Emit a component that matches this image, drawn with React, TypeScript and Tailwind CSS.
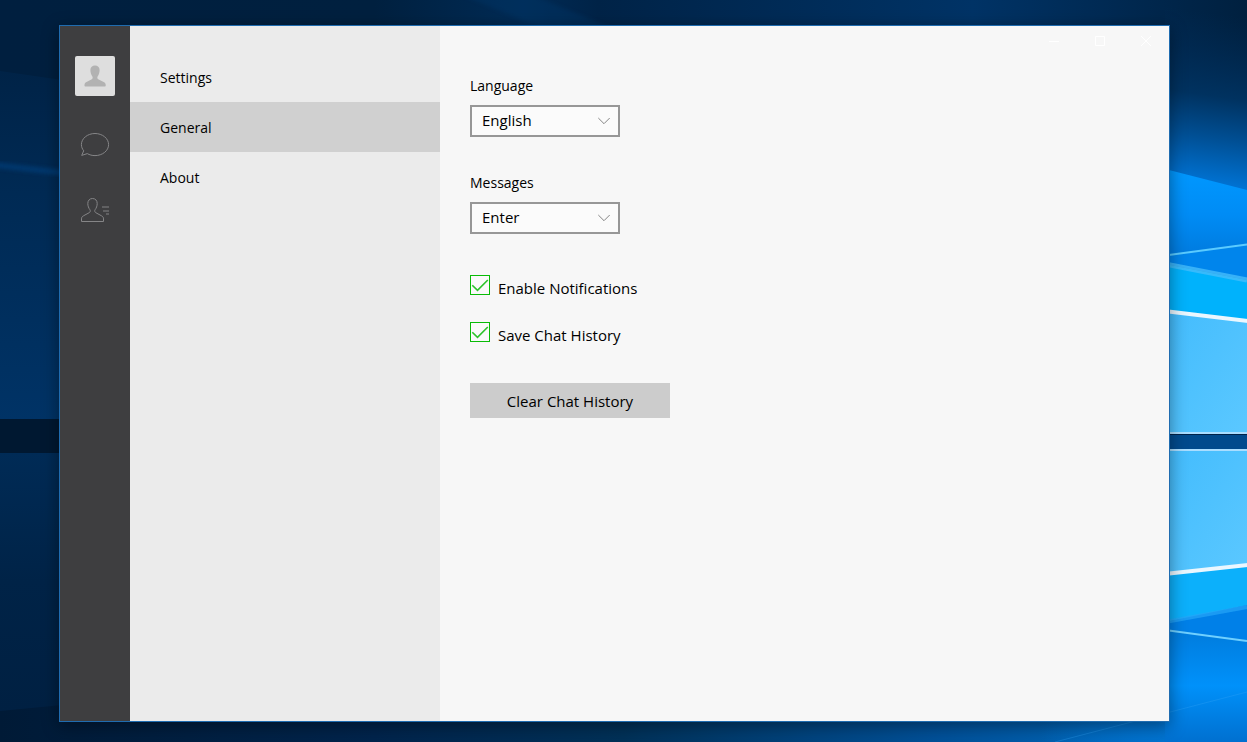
import { useState } from 'react';
import type { ReactNode } from 'react';

type Section = 'General' | 'About';

const SECTIONS: Section[] = ['General', 'About'];

export default function App() {
  const [section, setSection] = useState<Section>('General');
  const [language, setLanguage] = useState('English');
  const [sendKey, setSendKey] = useState('Enter');
  const [notify, setNotify] = useState(true);
  const [saveHistory, setSaveHistory] = useState(true);

  return (
    <div className="relative isolate flex min-h-screen overflow-hidden bg-[#00234a] pt-[25px] pr-[77px] pb-5 pl-[59px] font-['Open_Sans','Noto_Sans',sans-serif] text-black">
      <Wallpaper />

      <div className="flex flex-1 border border-[#1f6cb0] bg-[#f7f7f7] shadow-[0_4px_16px_rgba(0,0,0,0.4)]">
        {/* Icon rail */}
        <nav aria-label="Main" className="flex w-[70px] shrink-0 flex-col items-center bg-[#3e3e40] pt-[30px]">
          <button type="button" aria-label="Profile" className="size-10 rounded-xs bg-[#dedede]">
            <svg viewBox="0 0 40 40" className="size-10" fill="#b2b2b2">
              <path d="M20 9.5c-2.7 0-4.6 1.8-4.6 4.4 0 2.8.9 5.2 2 6.6.5.7.3 2.2-.6 2.7l-5.3 2.7c-1.4.7-2 1.7-2 3.1v.8c0 .5.3.7.8.7h19.6c.5 0 .8-.2.8-.7V29c0-1.4-.6-2.4-2-3.1l-5.5-2.7c-.9-.5-1.1-2-.6-2.7 1.1-1.4 2-3.8 2-6.600 0-2.600-1.900-4.400-4.600-4.400z" />
            </svg>
          </button>
          <button type="button" aria-label="Chats" className="mt-7 flex h-[42px] w-10 items-center justify-center">
            <svg viewBox="0 0 30 26" className="h-[26px] w-[30px]" fill="none" stroke="#858587">
              <path d="M3.7 18.8C2.3 17 1.4 14.900 1.4 12.600 1.4 6.500 7.500 1.500 15 1.500s13.600 5 13.600 11.100S22.500 23.600 15 23.600c-2.800 0-5.500-.7-7.700-2L1.700 23.400z" />
            </svg>
          </button>
          <button type="button" aria-label="Contacts" className="mt-6 flex h-10 w-10 items-center justify-center">
            <svg viewBox="0 0 30 26" className="h-[26px] w-[30px]" fill="none" stroke="#858587">
              <path d="M12.500 1.500c-2.900 0-4.700 2.100-4.700 5 0 2.400.9 4.700 2.100 6.200.7 1 .4 2.400-.7 3L3.700 18.700c-1.600.8-2.200 1.700-2.200 3.200v2.600h22v-2.600c0-1.500-.6-2.400-2.200-3.200l-5.500-3c-1.100-.6-1.400-2-.7-3 1.200-1.500 2.100-3.800 2.100-6.200 0-2.900-1.800-5-4.700-5z" />
              <path d="M22 10h7M23 14h6M26 17h3" strokeWidth="1.400" stroke="#6c6c6e" />
            </svg>
          </button>
        </nav>

        {/* Settings list */}
        <nav aria-label="Settings" className="w-[310px] shrink-0 bg-[#ebebeb] pt-[26px] text-sm">
          <h1 className="flex h-[50px] items-center px-[30px] pt-0.5">Settings</h1>
          {SECTIONS.map(s => (
            <button
              key={s}
              type="button"
              onClick={() => setSection(s)}
              className={`flex h-[50px] w-full items-center px-[30px] pt-0.5 ${section === s ? 'bg-[#d0d0d0]' : ''}`}
            >
              {s}
            </button>
          ))}
        </nav>

        <main className="min-w-0 flex-1">
          <WindowControls />

          {section === 'General' && (
            <div className="flex flex-col items-start px-[30px] pt-5">
              <SelectField id="language" label="Language" value={language} options={['English', 'Deutsch', 'Español']} onChange={setLanguage} />
              <div className="mt-9">
                <SelectField id="messages" label="Messages" value={sendKey} options={['Enter', 'Ctrl + Enter']} onChange={setSendKey} />
              </div>

              <div className="mt-[41px] flex flex-col gap-[23px]">
                <CheckField checked={notify} onChange={setNotify}>Enable Notifications</CheckField>
                <CheckField checked={saveHistory} onChange={setSaveHistory}>Save Chat History</CheckField>
              </div>

              <button type="button" className="mt-[37px] h-[35px] w-[200px] bg-[#cccccc] pt-0.5 text-[15px]">
                Clear Chat History
              </button>
            </div>
          )}
        </main>
      </div>
    </div>
  );
}

function WindowControls() {
  return (
    <div className="flex h-[30px] justify-end">
      <button type="button" aria-label="Minimize" className="flex w-[46px] items-center justify-center">
        <svg viewBox="0 0 10 10" className="size-2.5" fill="none" stroke="#fff"><path d="M0 5.500h10" /></svg>
      </button>
      <button type="button" aria-label="Maximize" className="flex w-[46px] items-center justify-center">
        <svg viewBox="0 0 10 10" className="size-2.5" fill="none" stroke="#fff"><path d="M.5.500h9v9h-9z" /></svg>
      </button>
      <button type="button" aria-label="Close" className="flex w-[46px] items-center justify-center">
        <svg viewBox="0 0 10 10" className="size-2.5" fill="none" stroke="#fff"><path d="M0 0l10 10M10 0L0 10" /></svg>
      </button>
    </div>
  );
}

interface SelectFieldProps {
  id: string;
  label: string;
  value: string;
  options: string[];
  onChange: (value: string) => void;
}

function SelectField({ id, label, value, options, onChange }: SelectFieldProps) {
  return (
    <div>
      <label htmlFor={id} className="mb-[9px] block text-sm leading-5">{label}</label>
      <div className="grid w-[150px] items-center">
        <select
          id={id}
          value={value}
          onChange={e => onChange(e.target.value)}
          className="col-start-1 row-start-1 h-8 w-full appearance-none border-2 border-[#979797] bg-[#fbfbfb] pr-7 pb-0.5 pl-2.5 text-[15px] leading-5"
        >
          {options.map(o => <option key={o}>{o}</option>)}
        </select>
        <svg viewBox="0 0 12 8" className="pointer-events-none col-start-1 row-start-1 mr-2.5 h-2 w-3 justify-self-end" fill="none" stroke="#858585">
          <path d="M.3 1L6 6.700 11.700 1" />
        </svg>
      </div>
    </div>
  );
}

function CheckField({ checked, onChange, children }: { checked: boolean; onChange: (value: boolean) => void; children: ReactNode }) {
  return (
    <label className="flex h-6 items-start gap-2">
      <span className="grid size-5 shrink-0">
        <input
          type="checkbox"
          checked={checked}
          onChange={e => onChange(e.target.checked)}
          className="peer col-start-1 row-start-1 size-5 appearance-none border border-[#09bb07] bg-[#fafafa]"
        />
        <svg viewBox="0 0 20 20" className="pointer-events-none invisible col-start-1 row-start-1 size-5 peer-checked:visible" fill="none" stroke="#2cc22b" strokeWidth="1.600">
          <path d="M2.300 10.200l5.200 5.100L17.800 5" />
        </svg>
      </span>
      <span className="pt-[3px] text-[15px] leading-5">{children}</span>
    </label>
  );
}

/* Desktop behind the window: dark room on the left, lit glass panes on the right */
function Wallpaper() {
  return (
    <svg aria-hidden="true" viewBox="0 0 1247 742" preserveAspectRatio="none" className="absolute inset-0 -z-10 h-full w-full">
      <defs>
        <linearGradient id="top" x1="0" x2="1" y1="0" y2="0">
          <stop offset="0" stopColor="#001f3f" />
          <stop offset=".3" stopColor="#00203f" />
          <stop offset=".42" stopColor="#002b55" />
          <stop offset=".48" stopColor="#002347" />
          <stop offset=".78" stopColor="#003366" />
          <stop offset="1" stopColor="#00203f" />
        </linearGradient>
        <linearGradient id="bottom" x1="0" x2="1" y1="0" y2="0">
          <stop offset="0" stopColor="#001a36" />
          <stop offset=".3" stopColor="#00244c" />
          <stop offset=".5" stopColor="#003158" />
          <stop offset=".75" stopColor="#005098" />
          <stop offset=".9" stopColor="#0066b8" />
          <stop offset="1" stopColor="#0073dc" />
        </linearGradient>
        <linearGradient id="left" x1="0" x2="0" y1="0" y2="1">
          <stop offset="0" stopColor="#002347" />
          <stop offset=".35" stopColor="#002a54" />
          <stop offset="1" stopColor="#003366" />
        </linearGradient>
        <linearGradient id="leftLow" x1="0" x2="0" y1="0" y2="1">
          <stop offset="0" stopColor="#002b56" />
          <stop offset=".5" stopColor="#002347" />
          <stop offset="1" stopColor="#002042" />
        </linearGradient>
        <linearGradient id="glow" gradientUnits="userSpaceOnUse" x1="1190" y1="10" x2="1165" y2="190">
          <stop offset="0" stopColor="#002b56" stopOpacity="0" />
          <stop offset=".45" stopColor="#003260" />
          <stop offset=".68" stopColor="#004f94" />
          <stop offset="1" stopColor="#007ce4" />
        </linearGradient>
        <linearGradient id="blue" x1="0" x2="0" y1="0" y2="1">
          <stop offset="0" stopColor="#0098ff" />
          <stop offset=".5" stopColor="#008cf5" />
          <stop offset="1" stopColor="#0079dc" />
        </linearGradient>
        <linearGradient id="paneUp" x1="0" x2="1" y1="0" y2="1">
          <stop offset="0" stopColor="#43bcfd" />
          <stop offset="1" stopColor="#5bc8ff" />
        </linearGradient>
        <linearGradient id="low" x1="0" x2="0" y1="0" y2="1">
          <stop offset="0" stopColor="#007bdc" />
          <stop offset=".5" stopColor="#0091fa" />
          <stop offset="1" stopColor="#0070d0" />
        </linearGradient>
        <linearGradient id="lowFade" x1="0" x2="1" y1="0" y2="0">
          <stop offset="0" stopColor="#0073d0" stopOpacity="0" />
          <stop offset="1" stopColor="#0073d0" />
        </linearGradient>
        <filter id="soft" x="-20%" y="-50%" width="140%" height="200%"><feGaussianBlur stdDeviation="2" /></filter>
        <filter id="edge" x="-20%" y="-50%" width="140%" height="200%"><feGaussianBlur stdDeviation=".7" /></filter>
      </defs>
      <rect width="1247" height="100" fill="url(#top)" />
      <rect y="700" width="1247" height="42" fill="url(#bottom)" />
      <rect x="1040" y="700" width="126" height="42" fill="url(#lowFade)" />
      <path d="M450-10h70l120 50h-70z" fill="#003a70" opacity=".3" filter="url(#soft)" />

      <path d="M0 71l62 9v340H0z" fill="url(#left)" />
      <path d="M-5 165l70 8" stroke="#00407d" strokeWidth="5" opacity=".75" filter="url(#soft)" />
      <path d="M0 419h62v34H0z" fill="#001831" />
      <path d="M0 453h62v252L0 711z" fill="url(#leftLow)" />

      <path d="M1165 0h82v206h-82z" fill="url(#glow)" />
      <path d="M1165 169l82 21v60l-82 10z" fill="url(#blue)" />
      <path d="M1165 256l82-11v35l-82-16z" fill="#0085ec" />
      <path d="M1165 264l82 16v42l-82-10z" fill="#00b2fc" />
      <path d="M1165 264l82 16" stroke="#45bdfb" strokeWidth="5" opacity=".8" filter="url(#edge)" />
      <path d="M1165 312l82 9v113h-82z" fill="url(#paneUp)" />
      <path d="M1165 255.500l82-11" stroke="#5acbff" strokeWidth="2" />
      <path d="M1160 310.500l92 11" stroke="#eaf7ff" strokeWidth="4" filter="url(#edge)" />
      <path d="M1165 435h82v14h-82z" fill="#004a8d" />
      <path d="M1165 433h82M1165 450h82" stroke="#a9ddff" strokeWidth="2" />
      <path d="M1165 451h82v115l-82 9z" fill="url(#paneUp)" />
      <path d="M1165 575l82-10v43l-82 14z" fill="#0cb0fb" />
      <path d="M1165 622l82-17v36l-82-11z" fill="#0080e8" />
      <path d="M1165 622l82-15" stroke="#25a6f8" strokeWidth="4" opacity=".7" filter="url(#edge)" />
      <path d="M1165 629l82 11v102h-82z" fill="url(#low)" />
      <path d="M1160 574.500l92-10" stroke="#eaf7ff" strokeWidth="4" filter="url(#edge)" />
      <path d="M1165 630l82 11" stroke="#6fd0ff" strokeWidth="2" />
      <path d="M1055 742l192-50" stroke="#38a6f7" opacity=".3" />
    </svg>
  );
}
